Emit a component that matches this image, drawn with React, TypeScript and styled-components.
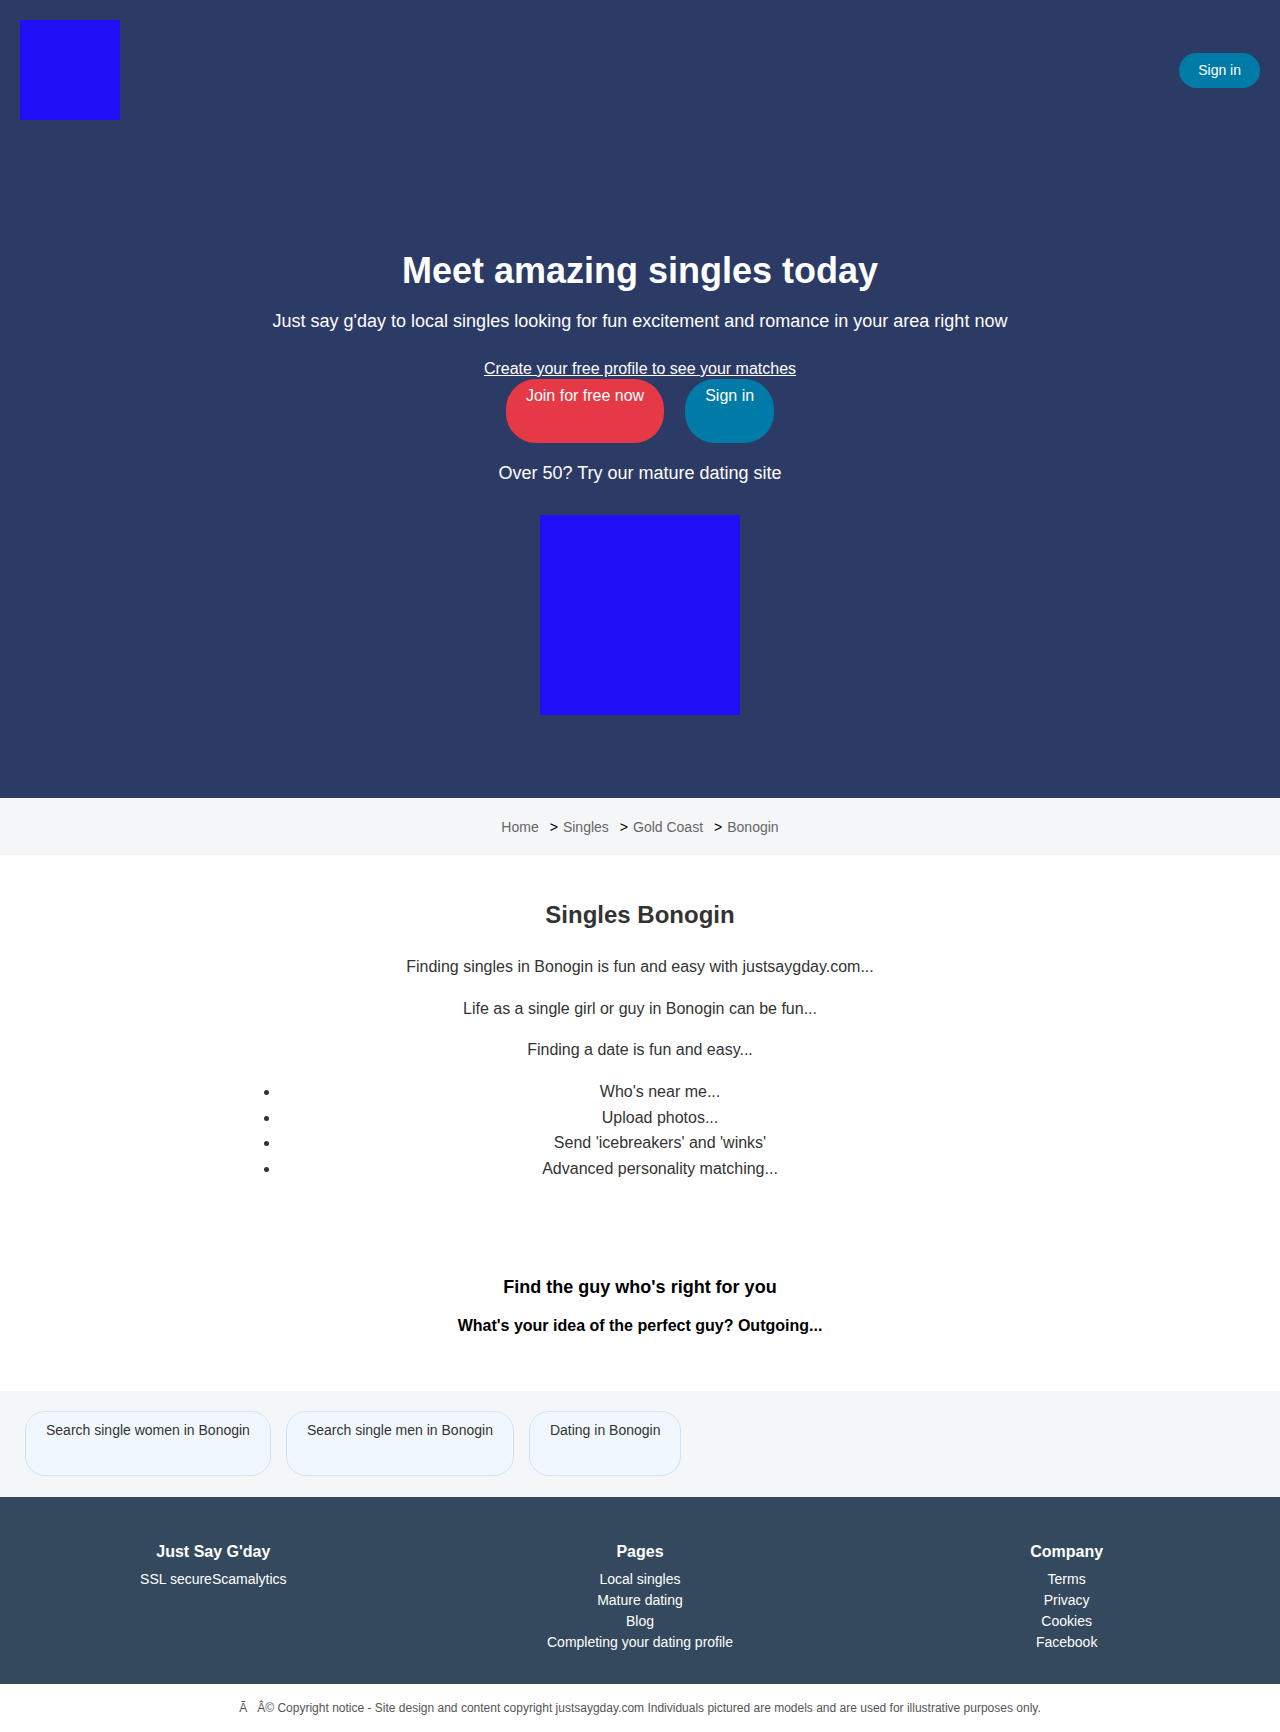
import React from "react";
import styled, { createGlobalStyle } from "styled-components";

const GlobalStyle = createGlobalStyle`
  html, body {
    margin: 0;
    padding: 0;
  }
  body {
    font-family: "Liberation Sans", Arial, Helvetica, sans-serif;
    line-height: 1.6;
    color: #333;
    background: #fff;
  }
  * { box-sizing: border-box; }
`;

const Hero = styled.section`
  background: #2c3a66;
  color: #fff;
`;

const Header = styled.header`
  display: flex;
  justify-content: space-between;
  align-items: center;
  padding: 20px;
`;

const Logo = styled.div`
  width: 100px;
  height: 100px;
  background: #2010f8;
`;

const HeaderButton = styled.a`
  display: inline-block;
  background: #007ba7;
  color: #fff;
  font-size: 14px;
  line-height: 19px;
  padding: 8px 19px;
  border-radius: 20px;
  text-decoration: none;
  height: 35px;
`;

const HeroBody = styled.div`
  text-align: center;
  padding: 109px 20px 83px;
`;

const Title = styled.h1`
  margin: 0;
  font-size: 36px;
  line-height: 43.2px;
  font-weight: 700;
  color: #fff;
`;

const Subtitle = styled.p`
  margin: 15px 0 0;
  font-size: 18px;
  line-height: 28.8px;
`;

const CtaLink = styled.a`
  display: block;
  margin-top: 22px;
  font-size: 16px;
  line-height: 21px;
  color: #fff;
  text-decoration: underline;
`;

const ButtonRow = styled.div`
  display: flex;
  justify-content: center;
  gap: 21px;
`;

const HeroButton = styled.a<{ $tone: "red" | "blue" }>`
  display: block;
  height: 64px;
  padding: 8px 20px;
  border-radius: 30px;
  font-size: 16px;
  line-height: 18px;
  color: #fff;
  text-decoration: none;
  background: ${(p) => (p.$tone === "red" ? "#e63946" : "#007ba7")};
`;

const MatureLink = styled.p`
  margin: 16px 0 0;
  font-size: 18px;
  line-height: 28.8px;
`;

const HeroImage = styled.div`
  width: 200px;
  height: 200px;
  margin: 27px auto 0;
  background: #2010f8;
`;

const Breadcrumb = styled.nav`
  background: #f5f6f8;
  padding: 18px 20px 16px;
  display: flex;
  justify-content: center;
  font-size: 14px;
  line-height: 23px;
`;

const Crumb = styled.a`
  color: #666;
  text-decoration: none;
`;

const CrumbSep = styled.span`
  color: #000;
  margin: 0 5px 0 11px;
`;

const Content = styled.section`
  max-width: 800px;
  margin: 0 auto;
  padding: 41px 0 39px;
  text-align: center;
`;

const SectionTitle = styled.h2`
  margin: 0 0 20px;
  font-size: 24px;
  line-height: 38.4px;
  color: #333;
`;

const Para = styled.p`
  margin: 0 0 16px;
  font-size: 16px;
  line-height: 25.6px;
  color: #333;
`;

const FeatureList = styled.ul`
  margin: 0 0 16px;
  padding-left: 40px;
  font-size: 16px;
  line-height: 25.6px;
  color: #333;
`;

const Promo = styled.section`
  text-align: center;
  padding: 37px 20px 52px;
  color: #000;
`;

const PromoTitle = styled.h3`
  margin: 0;
  font-size: 18px;
  line-height: 28.8px;
`;

const PromoSub = styled.h4`
  margin: 11px 0 0;
  font-size: 16px;
  line-height: 25.6px;
`;

const LinksBar = styled.div`
  background: #f5f6f8;
  padding: 20px 25px 21px;
  display: flex;
  gap: 15px;
`;

const LinkCard = styled.a`
  display: block;
  height: 65px;
  padding: 10px 20px;
  border: 1px solid #cfe4f6;
  border-radius: 20px;
  background: #f1f8fd;
  color: #333;
  font-size: 14px;
  line-height: 16px;
  text-decoration: none;
  white-space: nowrap;
`;

const Footer = styled.footer`
  background: #34495e;
  color: #fff;
  padding: 42px 0 31px;
  display: grid;
  grid-template-columns: repeat(3, 1fr);
  text-align: center;
`;

const FooterCol = styled.div`
  display: flex;
  flex-direction: column;
  align-items: center;
`;

const FooterHeading = styled.h4`
  margin: 0 0 5px;
  font-size: 16px;
  line-height: 25.6px;
  font-weight: 700;
`;

const FooterLinks = styled.div`
  display: flex;
  flex-direction: column;
  align-items: center;
  font-size: 14px;
  line-height: 21px;
`;

const FooterLink = styled.a`
  color: #fff;
  text-decoration: none;
`;

const Copyright = styled.div`
  padding: 15px 20px 13px;
  text-align: center;
  font-size: 12px;
  line-height: 19.2px;
  color: #555;
`;

export default function App() {
  return (
    <>
      <GlobalStyle />
      <Hero>
        <Header>
          <Logo />
          <HeaderButton href="#">Sign in</HeaderButton>
        </Header>
        <HeroBody>
          <Title>Meet amazing singles today</Title>
          <Subtitle>
            Just say g'day to local singles looking for fun excitement and romance in your area right now
          </Subtitle>
          <CtaLink href="#">Create your free profile to see your matches</CtaLink>
          <ButtonRow>
            <HeroButton $tone="red" href="#">Join for free now</HeroButton>
            <HeroButton $tone="blue" href="#">Sign in</HeroButton>
          </ButtonRow>
          <MatureLink>Over 50? Try our mature dating site</MatureLink>
          <HeroImage />
        </HeroBody>
      </Hero>

      <Breadcrumb>
        <Crumb href="#">Home</Crumb>
        <CrumbSep>&gt;</CrumbSep>
        <Crumb href="#">Singles</Crumb>
        <CrumbSep>&gt;</CrumbSep>
        <Crumb href="#">Gold Coast</Crumb>
        <CrumbSep>&gt;</CrumbSep>
        <Crumb href="#">Bonogin</Crumb>
      </Breadcrumb>

      <Content>
        <SectionTitle>Singles Bonogin</SectionTitle>
        <Para>Finding singles in Bonogin is fun and easy with justsaygday.com...</Para>
        <Para>Life as a single girl or guy in Bonogin can be fun...</Para>
        <Para>Finding a date is fun and easy...</Para>
        <FeatureList>
          <li>Who's near me...</li>
          <li>Upload photos...</li>
          <li>Send 'icebreakers' and 'winks'</li>
          <li>Advanced personality matching...</li>
        </FeatureList>
      </Content>

      <Promo>
        <PromoTitle>Find the guy who's right for you</PromoTitle>
        <PromoSub>What's your idea of the perfect guy? Outgoing...</PromoSub>
      </Promo>

      <LinksBar>
        <LinkCard href="#">Search single women in Bonogin</LinkCard>
        <LinkCard href="#">Search single men in Bonogin</LinkCard>
        <LinkCard href="#">Dating in Bonogin</LinkCard>
      </LinksBar>

      <Footer>
        <FooterCol>
          <FooterHeading>Just Say G'day</FooterHeading>
          <FooterLinks>
            <span>
              <span>SSL secure</span>
              <span>Scamalytics</span>
            </span>
          </FooterLinks>
        </FooterCol>
        <FooterCol>
          <FooterHeading>Pages</FooterHeading>
          <FooterLinks>
            <FooterLink href="#">Local singles</FooterLink>
            <FooterLink href="#">Mature dating</FooterLink>
            <FooterLink href="#">Blog</FooterLink>
            <FooterLink href="#">Completing your dating profile</FooterLink>
          </FooterLinks>
        </FooterCol>
        <FooterCol>
          <FooterHeading>Company</FooterHeading>
          <FooterLinks>
            <FooterLink href="#">Terms</FooterLink>
            <FooterLink href="#">Privacy</FooterLink>
            <FooterLink href="#">Cookies</FooterLink>
            <FooterLink href="#">Facebook</FooterLink>
          </FooterLinks>
        </FooterCol>
      </Footer>

      <Copyright>
        {"Ã\u00a0\u00a0\u00a0Â© Copyright notice - Site design and content copyright justsaygday.com Individuals pictured are models and are used for illustrative purposes only."}
      </Copyright>
    </>
  );
}
